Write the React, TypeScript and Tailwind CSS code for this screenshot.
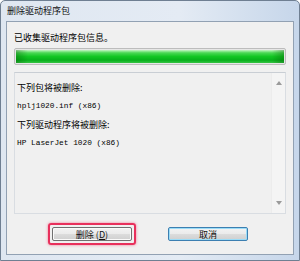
import React from "react";

const cjk = { fontFamily: '"Noto Sans CJK SC", "Noto Sans", sans-serif' };
const mono = { fontFamily: '"Liberation Mono", "DejaVu Sans Mono", monospace' };

function Btn({ children, focused }: { children: React.ReactNode; focused?: boolean }) {
  return (
    <div
      className={
        "w-[80px] h-[14px] rounded-[2px] border flex items-center justify-center text-[9px] leading-none text-[#111] bg-[linear-gradient(#f3f3f3_0%,#ebebeb_48%,#dcdcdc_52%,#cfcfcf_100%)] " +
        (focused
          ? "border-[#3c7fb1] shadow-[inset_0_0_0_1px_#9bdcf7]"
          : "border-[#707070] shadow-[inset_0_0_0_1px_#fafafa]")
      }
      style={cjk}
    >
      {children}
    </div>
  );
}

export default function App() {
  return (
    <div className="w-[300px] h-[261px] bg-white">
      <div className="w-[300px] h-[261px] flex flex-col rounded-t-[5px] border border-[#6f7f92] bg-[linear-gradient(90deg,#dfe7f1_0%,#e4ebf4_60%,#c6d6ea_100%)]">
        <div className="h-[20px] flex items-center pl-[6px] text-[9px] text-[#111]" style={cjk}>
          删除驱动程序包
        </div>
        <div className="flex-1 mx-[5px] mb-[5px] border border-[#92a1b3] bg-[#f0f0f0] flex flex-col px-[7px]">
          <div className="mt-[9px] h-[14px] flex items-center text-[9px] text-black" style={cjk}>
            已收集驱动程序包信息。
          </div>
          <div className="mt-[3px] h-[17px] w-[272px] border border-[#bcbcbc] rounded-[2px] bg-[#e6e6e6] p-[1px]">
            <div className="h-full w-full bg-[linear-gradient(#c4f5c4_0%,#4ad854_22%,#12c623_50%,#07b01b_78%,#36c443_100%)] relative">
              <div className="absolute inset-y-0 left-0 w-[12px] bg-[linear-gradient(90deg,rgba(0,80,0,0.35),rgba(0,80,0,0))]" />
              <div className="absolute inset-y-0 right-0 w-[12px] bg-[linear-gradient(270deg,rgba(0,80,0,0.35),rgba(0,80,0,0))]" />
            </div>
          </div>
          <div className="mt-[7px] h-[142px] w-[272px] border border-[#d9dde2] border-t-[#c9ced4] flex">
            <div className="flex-1 pl-[2px] pt-[5px] flex flex-col text-black">
              <div className="h-[19px] flex items-center text-[9px]" style={cjk}>下列包将被删除:</div>
              <div className="h-[19px] flex items-center text-[7.8px]" style={mono}>hplj1020.inf (x86)</div>
              <div className="h-[18px] flex items-center text-[9px]" style={cjk}>下列驱动程序将被删除:</div>
              <div className="h-[19px] flex items-center text-[7.8px]" style={mono}>HP LaserJet 1020 (x86)</div>
            </div>
            <div className="w-[14px] bg-[#f4f4f4] border-l border-[#ececec] flex flex-col items-center justify-between py-[8px]">
              <svg width="6" height="4" viewBox="0 0 6 4"><path d="M0 4 L3 0 L6 4 Z" fill="#9a9a9a" /></svg>
              <svg width="6" height="4" viewBox="0 0 6 4"><path d="M0 0 L3 4 L6 0 Z" fill="#9a9a9a" /></svg>
            </div>
          </div>
          <div className="mt-[9px] flex items-center pl-[34px] gap-[32px]">
            <div className="p-[2px] rounded-[3px] border-[2px] border-[#e8305c] shadow-[0_0_3px_#f07a95]">
              <Btn>
                删除 (<span className="underline">D</span>)
              </Btn>
            </div>
            <Btn focused>取消</Btn>
          </div>
        </div>
      </div>
    </div>
  );
}
